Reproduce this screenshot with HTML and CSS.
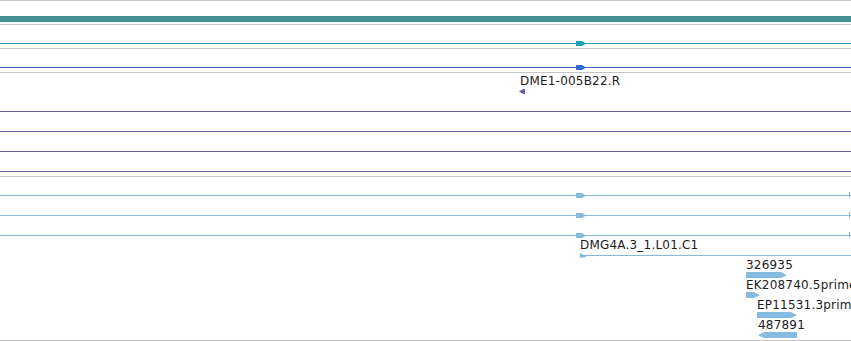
FILE: index.html
```html
<!DOCTYPE html>
<html>
	<head>
		<meta charset="UTF-8" />
		<title>Tracks</title>
		<link rel="stylesheet" href="styles.css">
	</head>
	<body>
		<div class="browser">
			<div class="overview"><div class="scalebar"></div></div>
			<!-- track 1 -->
			<div class="track">
				<div class="row">
					<div class="span teal" style="left:0;width:851px"></div>
					<div class="arrow fwd teal-head" style="left:576px"></div>
				</div>
			</div>
			<!-- track 2 -->
			<div class="track">
				<div class="row">
					<div class="span blue" style="left:0;width:851px"></div>
					<div class="arrow fwd blue-head" style="left:576px"></div>
				</div>
			</div>
			<!-- track 3 -->
			<div class="track">
				<div class="row">
					<span class="name" style="left:520px">DME1-005B22.R</span>
					<div class="arrow rev purple-head" style="left:519px"></div>
				</div>
				<div class="row"><div class="span purple" style="left:0;width:851px"></div></div>
				<div class="row"><div class="span purple" style="left:0;width:851px"></div></div>
				<div class="row"><div class="span purple" style="left:0;width:851px"></div></div>
				<div class="row"><div class="span purple" style="left:0;width:851px"></div></div>
			</div>
			<!-- track 4 -->
			<div class="track last">
				<div class="row">
					<div class="span sky end" style="left:0;width:851px"></div>
					<div class="arrow fwd sky-head" style="left:576px"></div>
				</div>
				<div class="row">
					<div class="span sky end" style="left:0;width:851px"></div>
					<div class="arrow fwd sky-head" style="left:576px"></div>
				</div>
				<div class="row">
					<div class="span sky end" style="left:0;width:851px"></div>
					<div class="arrow fwd sky-head" style="left:576px"></div>
				</div>
				<div class="row">
					<span class="name" style="left:580px">DMG4A.3_1.L01.C1</span>
					<div class="span sky" style="left:580px;width:271px"></div>
					<div class="flag sky-head" style="left:580px"></div>
				</div>
				<div class="row">
					<span class="name" style="left:746px">326935</span>
					<div class="box fwd sky-head" style="left:746px;width:41px"></div>
				</div>
				<div class="row">
					<span class="name" style="left:746px">EK208740.5prime</span>
					<div class="box fwd sky-head" style="left:746px;width:14px"></div>
				</div>
				<div class="row">
					<span class="name" style="left:757px">EP11531.3prime</span>
					<div class="box fwd sky-head" style="left:757px;width:40px"></div>
				</div>
				<div class="row">
					<span class="name" style="left:758px">487891</span>
					<div class="box rev sky-head" style="left:758px;width:39px"></div>
				</div>
			</div>
		</div>
	</body>
</html>
```

FILE: styles.css
```css
html,body{
	margin:0;
	padding:0;
	background:#fff;
}
.browser{
	width:851px;
	overflow:hidden;
	font-family:"DejaVu Sans",sans-serif;
	font-size:12px;
	color:#1c1c1c;
}
.overview{
	border-top:1px solid #c4c4c4;
	padding:15px 0 2px;
}
.scalebar{
	height:6px;
	background:#408f91;
}
.track{
	border-top:1px solid #c4c4c4;
	padding-bottom:3px;
}
.track.last{
	border-bottom:1px solid #c4c4c4;
}
.row{
	position:relative;
	height:20px;
}
.name{
	position:absolute;
	top:1px;
	line-height:15px;
	letter-spacing:0.2px;
	white-space:nowrap;
}
.span{
	position:absolute;
	top:18px;
	height:1px;
}
.span.end::after{
	content:"";
	position:absolute;
	right:1px;
	top:-3px;
	width:1px;
	height:6px;
	background:inherit;
}
.arrow{
	position:absolute;
	top:16px;
	width:10px;
	height:5px;
}
.arrow.fwd{
	clip-path:polygon(0 0,60% 0,100% 50%,60% 100%,0 100%);
}
.arrow.rev{
	width:6px;
	clip-path:polygon(0 50%,70% 0,100% 0,100% 100%,70% 100%);
}
.flag{
	position:absolute;
	top:16px;
	width:6px;
	height:5px;
	clip-path:polygon(0 0,100% 60%,100% 80%,0 100%);
}
.box{
	position:absolute;
	top:15px;
	height:6px;
}
.box.fwd{
	clip-path:polygon(0 0,calc(100% - 6px) 0,100% 55%,calc(100% - 6px) 100%,0 100%);
}
.box.rev{
	clip-path:polygon(0 55%,6px 0,100% 0,100% 100%,6px 100%);
}
.teal{background:#1f97ac;}
.teal-head{background:#17a3b9;}
.blue{background:#3b65b2;}
.blue-head{background:#2f6bd4;}
.purple{background:#6c5b9f;}
.purple-head{background:#7058a8;}
.sky{background:#88b8dc;}
.sky-head{background:#86bbe0;}
```
